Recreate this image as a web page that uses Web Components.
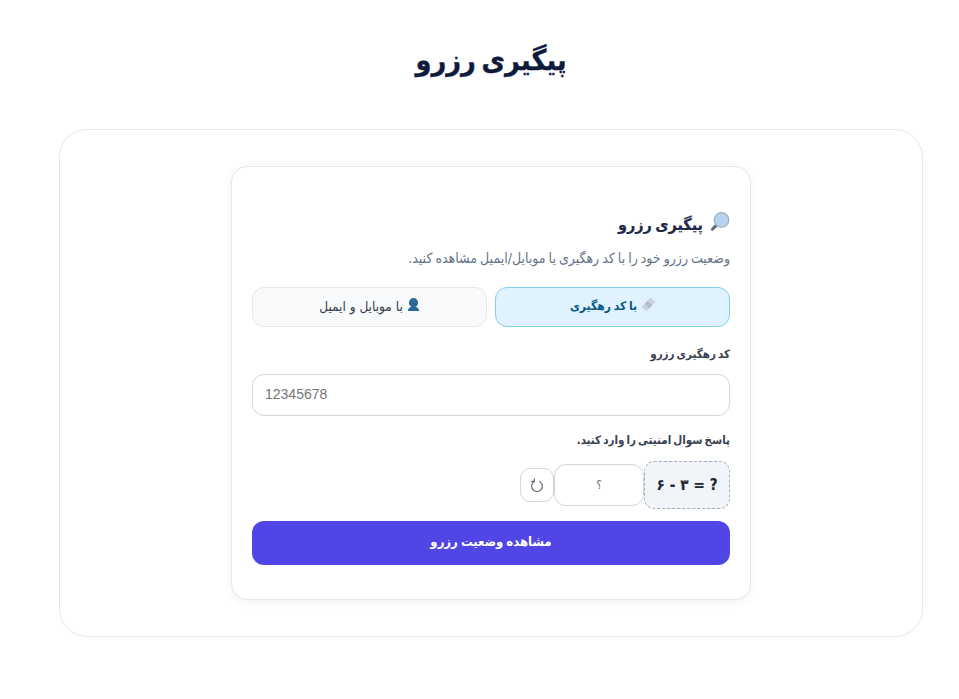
<!DOCTYPE html>
<html lang="fa" dir="rtl">
<head>
<meta charset="utf-8">
<title>پیگیری رزرو</title>
<style>
  html, body { margin: 0; background: #fff; }
  body { font-family: "DejaVu Sans Condensed", "DejaVu Sans", sans-serif; font-stretch: condensed; color: #0f172a; }
</style>
</head>
<body>
<tracking-page heading="پیگیری رزرو">
  <tracking-card heading="پیگیری رزرو" subtitle="وضعیت رزرو خود را با کد رهگیری یا موبایل/ایمیل مشاهده کنید."></tracking-card>
</tracking-page>

<script>
class TrackingPage extends HTMLElement {
  constructor() {
    super();
    this.attachShadow({ mode: 'open' });
  }

  connectedCallback() {
    this.shadowRoot.innerHTML = `
      <style>
        :host { display: block; padding: 36px 36px 62px 59px; }
        h1 {
          margin: 0 0 44px;
          font-size: 28.5px;
          line-height: 49px;
          font-weight: 700;
          word-spacing: -3px;
          -webkit-text-stroke: .35px currentColor;
          text-align: center;
          color: #0f1b3d;
        }
        .panel {
          border: 1px solid #e5e7f0;
          border-radius: 28px;
          padding: 36px 171px;
          background: #fff;
        }
      </style>
      <h1>${this.getAttribute('heading')}</h1>
      <div class="panel"><slot></slot></div>
    `;
  }
}

class TrackingTabs extends HTMLElement {
  constructor() {
    super();
    this.attachShadow({ mode: 'open' });
  }

  connectedCallback() {
    this.shadowRoot.innerHTML = `
      <style>
        :host { display: grid; grid-template-columns: 1fr 1fr; gap: 8px; margin-bottom: 18px; }
        button {
          height: 40px;
          padding: 0 0 2px;
          border-radius: 12px;
          font: inherit;
          font-size: 13.5px;
          display: flex;
          align-items: center;
          justify-content: center;
          gap: 4px;
          border: 1px solid #e5e7eb;
          background: #f9fafb;
          color: #374151;
        }
        button.active {
          border-color: #7dd3ea;
          background: #e0f2fe;
          color: #075985;
          font-size: 12px;
          font-weight: 700;
          word-spacing: -1px;
          gap: 5px;
        }
        svg { width: 13px; height: 13px; flex: none; margin-top: -3px; }
      </style>
      <button class="active" type="button">
        <svg viewBox="0 0 12 12"><g transform="rotate(-45 6 6)"><rect x="0" y="3" width="12" height="6" rx="1.2" fill="#ccd3da"/><rect x="4" y="3" width="4" height="6" fill="#b4bdc6"/></g></svg>
        <span>با کد رهگیری</span>
      </button>
      <button type="button">
        <svg viewBox="0 0 12 12"><circle cx="6" cy="4.3" r="4.2" fill="#2a6a94"/><path d="M.8 12c0-2.8 2.2-4 5.2-4s5.2 1.2 5.2 4z" fill="#2a6a94"/></svg>
        <span>با موبایل و ایمیل</span>
      </button>
    `;
  }
}

class FormField extends HTMLElement {
  constructor() {
    super();
    this.attachShadow({ mode: 'open' });
  }

  connectedCallback() {
    this.shadowRoot.innerHTML = `
      <style>
        :host { display: block; margin-bottom: 15px; }
        :host(.tight) { margin-bottom: 12px; }
        :host(.tight) label { margin-bottom: 12px; }
        label {
          display: block;
          margin-bottom: 11px;
          font-size: 11.5px;
          line-height: 18px;
          font-weight: 700;
          word-spacing: -1.5px;
          color: #374151;
        }
      </style>
      <label>${this.getAttribute('label')}</label>
      <slot></slot>
    `;
  }
}

class CaptchaRow extends HTMLElement {
  constructor() {
    super();
    this.attachShadow({ mode: 'open' });
  }

  connectedCallback() {
    this.shadowRoot.innerHTML = `
      <style>
        :host { display: flex; align-items: center; }
        .question {
          box-sizing: border-box;
          width: 86px;
          height: 48px;
          display: flex;
          align-items: center;
          justify-content: center;
          gap: 5px;
          border: 1px dashed #a3adbd;
          border-radius: 10px;
          background: #f1f5f9;
          font-size: 15px;
          font-weight: 700;
          -webkit-text-stroke: .2px currentColor;
          color: #1f2937;
        }
        input {
          box-sizing: border-box;
          width: 90px;
          height: 42px;
          border: 1px solid #d1d5e0;
          border-radius: 12px;
          background: #fff;
          text-align: center;
          font: inherit;
          font-size: 12px;
          outline: none;
        }
        input::placeholder { color: #6b7280; opacity: 1; }
        button {
          box-sizing: border-box;
          width: 34px;
          height: 34px;
          padding: 0;
          border: 1px solid #d1d5e0;
          border-radius: 10px;
          background: #fff;
          color: #5b6472;
          display: flex;
          align-items: center;
          justify-content: center;
        }
        svg { width: 14px; height: 15px; margin-top: 1px; }
      </style>
      <div class="question" dir="rtl"><span>?</span><span>=</span><span>۳</span><span>-</span><span>۶</span></div>
      <input type="text" placeholder="؟">
      <button type="button" aria-label="refresh">
        <svg viewBox="0 0 14 15" fill="none" stroke="currentColor" stroke-width="1.1" stroke-linecap="round" stroke-linejoin="round">
          <path d="M9.7 3.4A5.4 5.4 0 1 1 4.3 3.4"/>
          <path d="M4.3 .9V3.4H1.7"/>
        </svg>
      </button>
    `;
  }
}

class TrackingCard extends HTMLElement {
  constructor() {
    super();
    this.attachShadow({ mode: 'open' });
  }

  connectedCallback() {
    this.shadowRoot.innerHTML = `
      <style>
        :host {
          display: block;
          box-sizing: border-box;
          width: 520px;
          padding: 44px 20px 34px;
          border: 1px solid #e5e7eb;
          border-radius: 16px;
          background: #fff;
          box-shadow: 0 2px 10px rgba(15, 23, 42, .06);
        }
        h2 {
          margin: 0 0 9px;
          display: flex;
          align-items: center;
          gap: 7px;
          font-size: 16px;
          line-height: 28px;
          font-weight: 700;
          word-spacing: -1.5px;
          -webkit-text-stroke: .2px currentColor;
          color: #1e2a4a;
        }
        h2 svg { width: 20px; height: 20px; flex: none; margin-top: -6px; }
        p {
          margin: 0 0 19px;
          font-size: 14px;
          line-height: 20px;
          word-spacing: -1px;
          color: #64748b;
        }
        .code {
          box-sizing: border-box;
          display: block;
          width: 100%;
          height: 42px;
          padding: 0 12px 3px;
          border: 1px solid #d1d5e0;
          border-radius: 12px;
          background: #fff;
          font-family: "Liberation Sans", sans-serif;
          font-size: 14px;
          text-align: left;
          outline: none;
        }
        .code::placeholder { color: #757575; opacity: 1; }
        .submit {
          display: block;
          width: 100%;
          height: 44px;
          padding: 0 0 3px;
          border: 0;
          border-radius: 12px;
          background: #4f46e5;
          color: #fff;
          font: inherit;
          font-size: 13px;
          font-weight: 700;
          word-spacing: -1px;
        }
      </style>
      <h2>
        <svg viewBox="0 0 20 20"><path d="M7 12.6 2.4 17.2" stroke="#5c6b78" stroke-width="3" stroke-linecap="round"/><circle cx="11.5" cy="8" r="7.3" fill="#b5d3f0" stroke="#9fb0bf" stroke-width="1.3"/></svg>
        <span>${this.getAttribute('heading')}</span>
      </h2>
      <p>${this.getAttribute('subtitle')}</p>
      <tracking-tabs></tracking-tabs>
      <form-field label="کد رهگیری رزرو"><input class="code" type="text" placeholder="12345678"></form-field>
      <form-field class="tight" label="پاسخ سوال امنیتی را وارد کنید."><captcha-row></captcha-row></form-field>
      <button class="submit" type="button">مشاهده وضعیت رزرو</button>
    `;
  }
}

customElements.define('tracking-page', TrackingPage);
customElements.define('tracking-tabs', TrackingTabs);
customElements.define('form-field', FormField);
customElements.define('captcha-row', CaptchaRow);
customElements.define('tracking-card', TrackingCard);
</script>
</body>
</html>
